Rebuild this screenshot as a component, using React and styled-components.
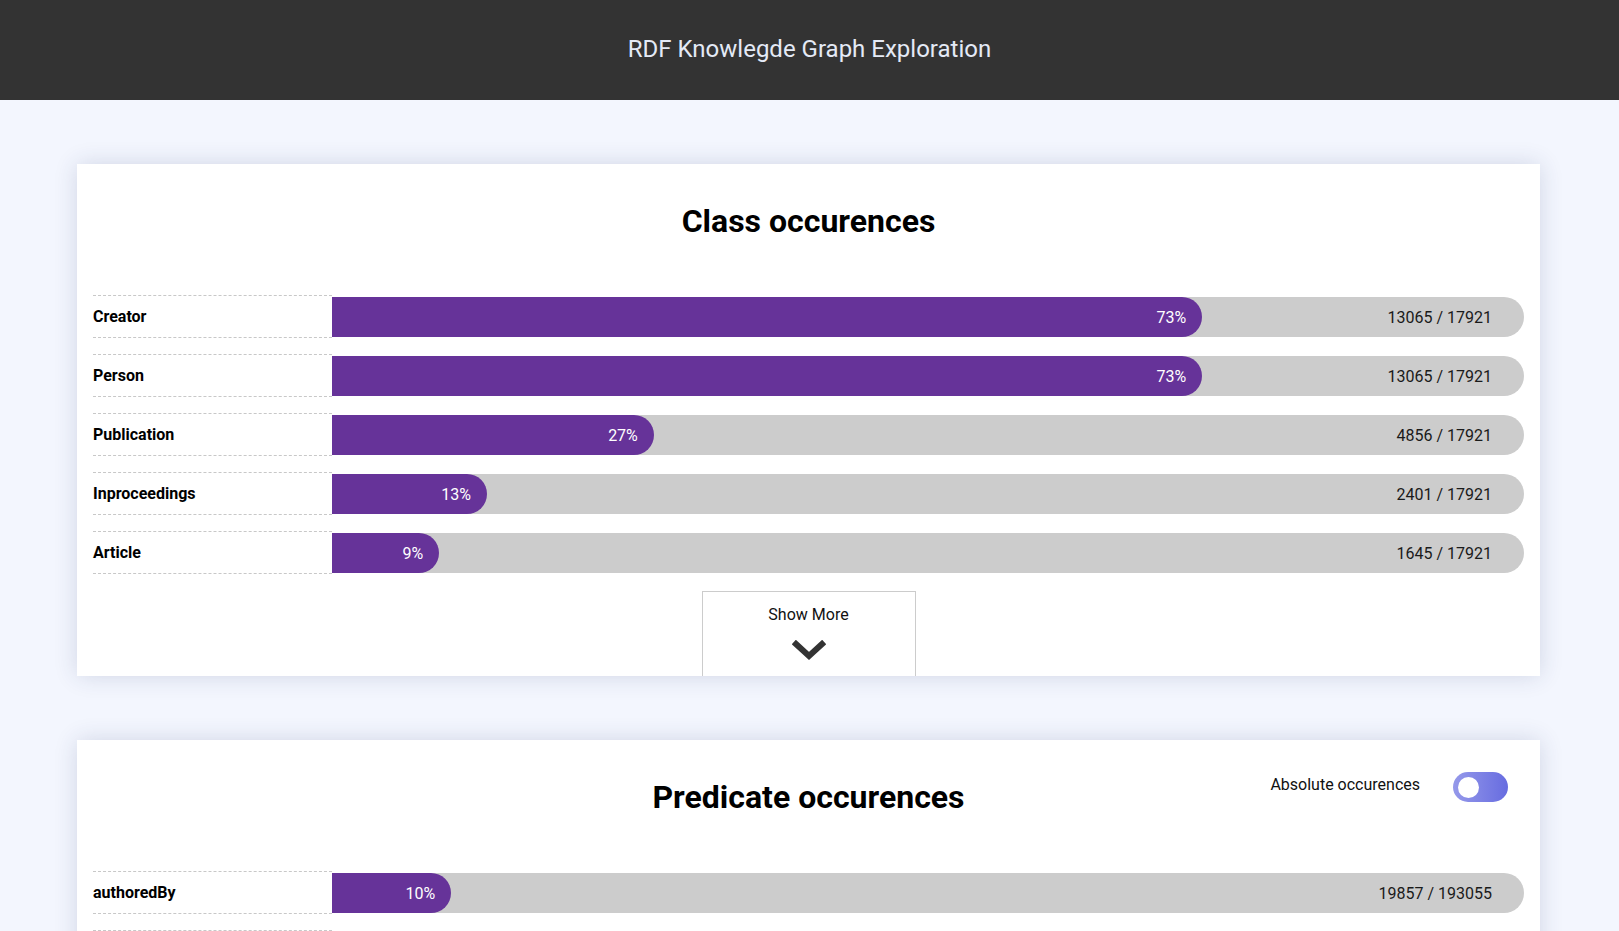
import * as React from "react";
import styled, { createGlobalStyle } from "styled-components";

const colors = {
  header: "#333333",
  page: "#f3f6fe",
  purple: "#663399",
  track: "#cccccc",
  dash: "#c8c8c8",
};

const GlobalStyle = createGlobalStyle`
  html, body {
    margin: 0;
    padding: 0;
    background: ${colors.page};
    font-family: Roboto, "Liberation Sans", Arial, sans-serif;
    color: #111;
  }
`;

const classData = [
  { name: "Creator", count: 13065, total: 17921 },
  { name: "Person", count: 13065, total: 17921 },
  { name: "Publication", count: 4856, total: 17921 },
  { name: "Inproceedings", count: 2401, total: 17921 },
  { name: "Article", count: 1645, total: 17921 },
];

const predicateData = [
  { name: "authoredBy", count: 19857, total: 193055 },
  { name: "title", count: 17921, total: 193055 },
];

const Header = styled.header`
  height: 100px;
  background: ${colors.header};
  display: flex;
  align-items: center;
  justify-content: center;
  color: #e4eaf6;
  font-size: 24px;
  padding-bottom: 2px;
  box-sizing: border-box;
`;

const Main = styled.main`
  display: flex;
  flex-direction: column;
  gap: 64px;
  padding: 64px 79px 64px 77px;
`;

const Card = styled.section`
  position: relative;
  background: #fff;
  box-shadow: 0 0 22px rgba(40, 50, 100, 0.16);
  padding: 16px 16px 0;
  overflow: hidden;
`;

const Title = styled.h2`
  margin: 22px 0 55px;
  text-align: center;
  font-size: 32px;
  line-height: 38px;
  font-weight: 700;
  color: #000;
`;

const Rows = styled.div`
  display: flex;
  flex-direction: column;
  gap: 16px;
`;

const Row = styled.div`
  display: flex;
  align-items: flex-end;
`;

const Label = styled.div`
  width: 239px;
  flex-shrink: 0;
  height: 43px;
  box-sizing: border-box;
  border-top: 1px dashed ${colors.dash};
  border-bottom: 1px dashed ${colors.dash};
  display: flex;
  align-items: center;
  font-size: 16px;
  font-weight: 700;
  color: #000;
`;

const Track = styled.div`
  position: relative;
  flex: 1;
  height: 40px;
  margin-bottom: 1px;
  background: ${colors.track};
  border-radius: 0 20px 20px 0;
  display: flex;
  align-items: center;
  justify-content: flex-end;
`;

const Fill = styled.div`
  position: absolute;
  left: 0;
  top: 0;
  bottom: 0;
  background: ${colors.purple};
  border-radius: 0 20px 20px 0;
  display: flex;
  align-items: center;
  justify-content: flex-end;
  padding-right: 16px;
  box-sizing: border-box;
  color: #fff;
  font-size: 16px;
`;

const Count = styled.span`
  padding-right: 32px;
  font-size: 16px;
  color: #1a1a1a;
`;

const MoreButton = styled.button`
  align-self: center;
  margin-top: 17px;
  width: 214px;
  height: 85px;
  background: #fff;
  border: 1px solid ${colors.track};
  border-bottom: none;
  display: flex;
  flex-direction: column;
  align-items: center;
  padding-top: 13px;
  gap: 16px;
  font-family: inherit;
  font-size: 16px;
  color: #111;
  cursor: pointer;
`;

const Body = styled.div`
  display: flex;
  flex-direction: column;
`;

const ToggleWrap = styled.label`
  position: absolute;
  top: 32px;
  right: 32px;
  display: flex;
  align-items: center;
  gap: 33px;
  font-size: 16px;
  color: #111;
`;

const ToggleText = styled.span`
  margin-bottom: 5px;
`;

const Switch = styled.span`
  width: 55px;
  height: 30px;
  border-radius: 15px;
  background: linear-gradient(90deg, #9599ea, #676ce0);
  display: flex;
  align-items: center;
  padding-left: 5px;
  box-sizing: border-box;

  &::after {
    content: "";
    width: 21px;
    height: 21px;
    border-radius: 50%;
    background: #fff;
  }
`;

const BarRow = ({ name, count, total }) => {
  const pct = Math.round((count / total) * 100);
  return (
    <Row>
      <Label>{name}</Label>
      <Track>
        <Fill style={{ width: `${pct}%` }}>{pct}%</Fill>
        <Count>
          {count} / {total}
        </Count>
      </Track>
    </Row>
  );
};

const Chevron = () => (
  <svg width="34" height="22" viewBox="0 0 34 22">
    <path
      d="M4 4 L17 16 L30 4"
      fill="none"
      stroke="#333"
      strokeWidth="6"
      strokeLinecap="square"
      strokeLinejoin="miter"
    />
  </svg>
);

export default function App() {
  return (
    <>
      <GlobalStyle />
      <Header>RDF Knowlegde Graph Exploration</Header>
      <Main>
        <Card>
          <Body>
            <Title>Class occurences</Title>
            <Rows>
              {classData.map((d) => (
                <BarRow key={d.name} {...d} />
              ))}
            </Rows>
            <MoreButton>
              Show More
              <Chevron />
            </MoreButton>
          </Body>
        </Card>
        <Card>
          <ToggleWrap>
            <ToggleText>Absolute occurences</ToggleText>
            <Switch />
          </ToggleWrap>
          <Body>
            <Title>Predicate occurences</Title>
            <Rows>
              {predicateData.map((d) => (
                <BarRow key={d.name} {...d} />
              ))}
            </Rows>
          </Body>
        </Card>
      </Main>
    </>
  );
}
